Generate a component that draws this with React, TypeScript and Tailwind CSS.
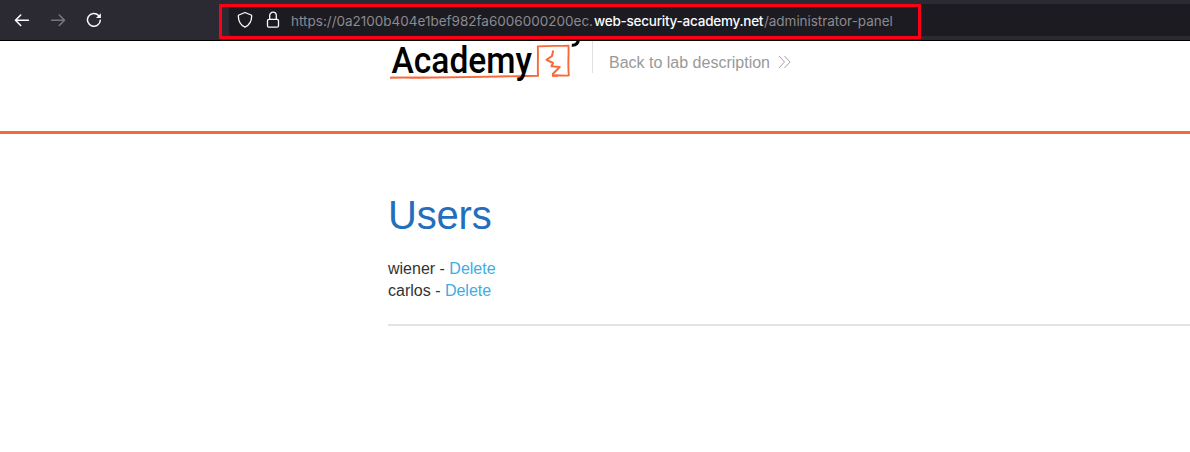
function BackArrow({ className }: { className: string }) {
  return (
    <svg className={className} width="16" height="16" viewBox="0 0 16 16" fill="none" stroke="currentColor" strokeWidth="1.6" strokeLinecap="round" strokeLinejoin="round">
      <path d="M14.4 8.300H1.800M6.700 3L1.500 8.300l5.200 5.200" />
    </svg>
  );
}

function Reload() {
  return (
    <svg className="text-[#fbfbfe]" width="16" height="16" viewBox="0 0 16 16" fill="none" stroke="currentColor" strokeWidth="1.5" strokeLinecap="round">
      <path d="M12.600 3.500A6.400 6.400 0 1 0 14.300 8.200" />
      <path d="M14.900 1.200v4.800h-4.900z" fill="currentColor" stroke="none" />
    </svg>
  );
}

function Shield() {
  return (
    <svg width="16" height="18" viewBox="0 0 16 18" fill="none" stroke="#fbfbfe" strokeWidth="1.3" strokeLinejoin="round">
      <path d="M8 1.500L14.100 4c.4.2.6.5.6.9-.1 5-1.700 8.800-6.700 11.300C3 13.700 1.400 9.900 1.300 4.900c0-.4.2-.7.6-.9z" />
    </svg>
  );
}

function Lock() {
  return (
    <svg width="14" height="18" viewBox="0 0 14 18" fill="none" stroke="#fbfbfe" strokeWidth="1.3">
      <rect x="1.500" y="8.300" width="11" height="7.900" rx="1.500" />
      <path d="M3.700 8.300V4.500a3.300 3.300 0 0 1 6.600 0v3.800" />
    </svg>
  );
}

function Toolbar() {
  return (
    <div className="relative z-10 flex h-[41px] w-full border-b border-black bg-[#2b2a33] font-['Inter',sans-serif]">
      <div className="flex w-[229px] shrink-0 items-center gap-5 pl-3.5">
        <BackArrow className="text-[#fbfbfe]" />
        <BackArrow className="-scale-x-100 text-[#77767c]" />
        <Reload />
      </div>
      <div className="mt-1 flex h-8 grow items-center rounded-l bg-[#1c1b22] pl-2 text-[13.5px] whitespace-nowrap">
        <Shield />
        <span className="ml-[13px]"><Lock /></span>
        <span className="ml-[11px] flex pt-0.5 text-[#8b8a8f]">
          <span className="w-[303px]">https://0a2100b404e1bef982fa6006000200ec.</span>
          <span className="w-[170px] font-medium tracking-[-0.24px] text-[#fbfbfe]">web-security-academy.net</span>
          <span className="tracking-[-0.04px]">/administrator-panel</span>
        </span>
      </div>
      <div className="absolute top-1 left-[219px] h-[35px] w-[702px] border-[3px] border-[#fc0018]" />
    </div>
  );
}

function Logo() {
  return (
    <svg className="shrink-0 overflow-visible" width="204" height="48" viewBox="388 41 204 48">
      <g fill="none" stroke="#f8693a" strokeLinejoin="round">
        <path d="M390 77.800c16-.4 29 .2 46-.2 34-.4 61-1.100 91-1.600l11-.1c-.5-10 .3-20-.2-29.500 10-.7 21-.4 30.700-.8.400 10-.8 19 .3 29.800-5 .6-10-.4-16.500.3" strokeWidth="1.900" />
        <path d="M391 77.200l50-.1 28 .1" strokeWidth="0.800" />
        <path d="M553.200 50.500l-1.200 5.500-5.500 3.800 6.600 3.200-1.700 3.300 8.300.7-6.900 7 .3 1.800 5-.2" strokeWidth="2" />
      </g>
      <text x="391.500" y="72.500" fontFamily="Roboto, sans-serif" fontWeight="500" fontSize="37.500" textLength="140.500" lengthAdjust="spacingAndGlyphs" fill="#000">Academy</text>
      <path d="M578.800 39c-.8 4.400-2.500 6.700-7 6.300" fill="none" stroke="#000" strokeWidth="3" />
    </svg>
  );
}

function UserRow({ name }: { name: string }) {
  return (
    <p className="text-[16px] leading-[22px] text-[#333332]">
      {name} - <a className="text-[#3cade4]" href="#">Delete</a>
    </p>
  );
}

export default function App() {
  return (
    <div className="h-[452px] w-full overflow-hidden bg-white font-['Liberation_Sans',Arial,sans-serif]">
      <Toolbar />
      <header className="flex h-[93px] items-start border-b-[3px] border-[#f36a36] pl-[388px]">
        <Logo />
        <a className="flex h-8 items-center border-l border-[#e0e0e0] pt-3 pl-4 text-[16px] text-[#999]" href="#">
          Back to lab description
          <svg className="relative -top-px ml-2" width="14" height="14" viewBox="0 0 14 14" fill="none" stroke="#999" strokeWidth="0.9">
            <path d="M1 1l5.500 6L1 13M6.500 1L12 7l-5.500 6" />
          </svg>
        </a>
      </header>
      <main className="pt-[58px] pl-[388px]">
        <h1 className="text-[40px] leading-[46px] tracking-[-0.2px] text-[#236fbd]">Users</h1>
        <section className="mt-[20px] border-b-2 border-[#e4e4e4] pb-[22px]">
          <UserRow name="wiener" />
          <UserRow name="carlos" />
        </section>
      </main>
    </div>
  );
}
